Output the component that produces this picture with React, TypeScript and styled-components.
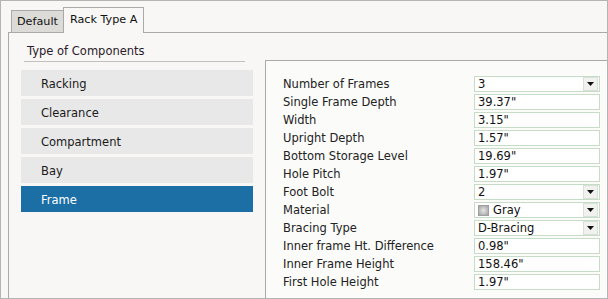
import styled, { createGlobalStyle } from 'styled-components';

const GlobalStyle = createGlobalStyle`
    html, body {
        margin: 0;
        padding: 0;
        background: #f8f7f5;
    }
    body {
        font-family: "DejaVu Sans", Verdana, sans-serif;
        font-size: 11.5px;
        color: #222;
    }
`;

interface TabProps {
    $active?: boolean
}

interface ItemProps {
    $selected?: boolean
}

const Frame = styled.div`
    width: 608px;
    height: 299px;
    box-sizing: border-box;
    border: 1px solid #b4b4b4;
    display: flex;
    flex-direction: column;
    overflow: hidden;
    background: #f8f7f5;
`;

const TabStrip = styled.div`
    height: 31px;
    padding-left: 10px;
    display: flex;
    align-items: flex-end;
    flex-shrink: 0;
`;

const Tab = styled.div<TabProps>`
    box-sizing: border-box;
    height: ${p => (p.$active ? '26px' : '22px')};
    padding: ${p => (p.$active ? '4px 6px 0 6px' : '3px 5px 0 5px')};
    margin-bottom: ${p => (p.$active ? '-1px' : '0')};
    background: ${p => (p.$active ? '#f8f7f5' : '#dcdbd8')};
    border: 1px solid #a9a9a9;
    border-bottom: none;
    ${p => !p.$active && 'border-right: none;'}
    position: relative;
    z-index: ${p => (p.$active ? 1 : 0)};
    font-size: 11.2px;
    line-height: 16px;
    color: #111;
`;

const TabPanel = styled.div`
    flex: 1;
    margin-left: 7px;
    border-top: 1px solid #a9a9a9;
    border-left: 1px solid #a9a9a9;
    display: flex;
    min-height: 0;
`;

const Sidebar = styled.div`
    width: 256px;
    flex-shrink: 0;
`;

const SectionTitle = styled.div`
    margin: 0 20px 0 15px;
    padding: 10px 0 2px 3px;
    line-height: 16px;
    border-bottom: 1px solid #c2c0bc;
    color: #2a1a2a;
`;

const ComponentList = styled.div`
    margin: 8px 12px 0 12px;
    display: flex;
    flex-direction: column;
    gap: 3px;
`;

const ComponentItem = styled.div<ItemProps>`
    height: 26px;
    padding: 1px 0 0 20px;
    box-sizing: border-box;
    display: flex;
    align-items: center;
    background: ${p => (p.$selected ? '#1b6fa4' : '#e8e8e8')};
    color: ${p => (p.$selected ? '#ffffff' : '#1a1a1a')};
`;

const PropertyPanel = styled.div`
    flex: 1;
    margin-top: 27px;
    border-top: 1px solid #a9a9a9;
    border-left: 1px solid #a9a9a9;
    background: #fbfbfa;
    padding: 15px 0 0 17px;
    display: flex;
    flex-direction: column;
    gap: 2px;
`;

const PropertyRow = styled.div`
    display: flex;
    align-items: center;
    height: 16px;
`;

const Label = styled.div`
    width: 191px;
    flex-shrink: 0;
    color: #222;
    line-height: 16px;
    white-space: nowrap;
`;

const Field = styled.div`
    box-sizing: border-box;
    width: 126px;
    height: 16px;
    border: 1px solid #c6dcc6;
    background: #ffffff;
    display: flex;
    align-items: center;
    padding-left: 3px;
    color: #111;
    line-height: 14px;
`;

const FieldValue = styled.span`
    flex: 1;
    display: flex;
    align-items: center;
    white-space: nowrap;
`;

const DropButton = styled.div`
    box-sizing: border-box;
    width: 15px;
    height: 14px;
    margin-right: 1px;
    background: #f1f1f0;
    border: 1px solid #d6e2d6;
    display: flex;
    align-items: center;
    justify-content: center;
`;

const Swatch = styled.span`
    width: 11px;
    height: 11px;
    margin: 0 4px 0 0;
    background: radial-gradient(circle at 50% 50%, #e6e6e6 0%, #b8b8b8 55%, #8e8e8e 100%);
    box-shadow: inset 0 0 0 1px #a0a0a0;
`;

const Arrow = () => (
    <svg width="7" height="4" viewBox="0 0 7 4">
        <polygon points="0,0 7,0 3.5,4" fill="#111" />
    </svg>
);

const components = ['Racking', 'Clearance', 'Compartment', 'Bay', 'Frame'];

const properties = [
    { label: 'Number of Frames', value: '3', select: true },
    { label: 'Single Frame Depth', value: '39.37"' },
    { label: 'Width', value: '3.15"' },
    { label: 'Upright Depth', value: '1.57"' },
    { label: 'Bottom Storage Level', value: '19.69"' },
    { label: 'Hole Pitch', value: '1.97"' },
    { label: 'Foot Bolt', value: '2', select: true },
    { label: 'Material', value: 'Gray', select: true, swatch: true },
    { label: 'Bracing Type', value: 'D-Bracing', select: true },
    { label: 'Inner frame Ht. Difference', value: '0.98"' },
    { label: 'Inner Frame Height', value: '158.46"' },
    { label: 'First Hole Height', value: '1.97"' },
];

const App = () => {
    return (
        <>
            <GlobalStyle />
            <Frame>
                <TabStrip>
                    <Tab>Default</Tab>
                    <Tab $active>Rack Type A</Tab>
                </TabStrip>
                <TabPanel>
                    <Sidebar>
                        <SectionTitle>Type of Components</SectionTitle>
                        <ComponentList>
                            {components.map(name => (
                                <ComponentItem key={name} $selected={name === 'Frame'}>
                                    {name}
                                </ComponentItem>
                            ))}
                        </ComponentList>
                    </Sidebar>
                    <PropertyPanel>
                        {properties.map(prop => (
                            <PropertyRow key={prop.label}>
                                <Label>{prop.label}</Label>
                                <Field>
                                    <FieldValue>
                                        {prop.swatch && <Swatch />}
                                        {prop.value}
                                    </FieldValue>
                                    {prop.select && (
                                        <DropButton>
                                            <Arrow />
                                        </DropButton>
                                    )}
                                </Field>
                            </PropertyRow>
                        ))}
                    </PropertyPanel>
                </TabPanel>
            </Frame>
        </>
    );
}

export default App;
